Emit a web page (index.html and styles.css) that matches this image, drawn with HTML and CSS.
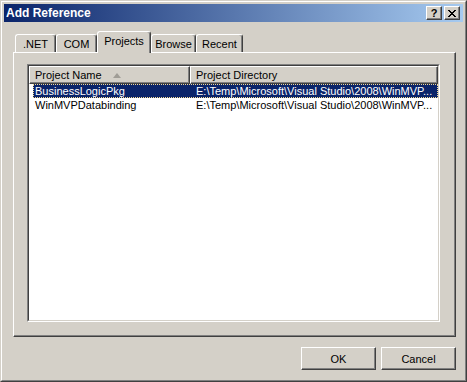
FILE: index.html
```html
<!DOCTYPE html>
<html lang="en">
    <head>
        <meta charset="UTF-8">
        <title>Add Reference</title>
        <link rel="stylesheet" href="styles.css">
    </head>
    <body>
        <div class="window">
            <div class="frame">
                <div class="titlebar">
                    <span class="title">Add Reference</span>
                    <button class="caption-btn help">?</button>
                    <button class="caption-btn close">
                        <svg width="8" height="7" viewBox="0 0 8 7"><path fill="#000" d="M0 0h2v1H0zM6 0h2v1H6zM1 1h2v1H1zM5 1h2v1H5zM2 2h4v1H2zM3 3h2v1H3zM2 4h4v1H2zM1 5h2v1H1zM5 5h2v1H5zM0 6h2v1H0zM6 6h2v1H6z"/></svg>
                    </button>
                </div>
                <div class="content">
                    <div class="tabs">
                        <div class="tab tab-net">.NET</div>
                        <div class="tab tab-com">COM</div>
                        <div class="tab tab-projects active">Projects</div>
                        <div class="tab tab-browse">Browse</div>
                        <div class="tab tab-recent">Recent</div>
                    </div>
                    <div class="panel">
                        <div class="list">
                            <div class="list-inner">
                                <div class="header">
                                    <div class="col col-name">Project Name
                                        <svg class="sort" width="8" height="5" viewBox="0 0 8 5"><path fill="#a09d96" d="M4 0L8 5H0z"/></svg>
                                    </div>
                                    <div class="col col-dir">Project Directory</div>
                                </div>
                                <div class="row selected">
                                    <div class="cell cell-name">BusinessLogicPkg</div>
                                    <div class="cell cell-dir">E:\Temp\Microsoft\Visual Studio\2008\WinMVP...</div>
                                </div>
                                <div class="row">
                                    <div class="cell cell-name">WinMVPDatabinding</div>
                                    <div class="cell cell-dir">E:\Temp\Microsoft\Visual Studio\2008\WinMVP...</div>
                                </div>
                            </div>
                        </div>
                    </div>
                    <div class="footer">
                        <button class="btn">OK</button>
                        <button class="btn">Cancel</button>
                    </div>
                </div>
            </div>
        </div>
    </body>
</html>
```

FILE: styles.css
```css
body{
    margin:0;
    background:#d4d0c8;
    font-family:"Liberation Sans",Arial,sans-serif;
    font-size:11px;
    color:#000;
}
.window{
    width:467px;
    height:382px;
    box-sizing:border-box;
    border:1px solid;
    border-color:#d4d0c8 #404040 #404040 #d4d0c8;
}
.frame{
    height:100%;
    box-sizing:border-box;
    border:1px solid;
    border-color:#fff #808080 #808080 #fff;
    padding:2px;
}
.titlebar{
    height:18px;
    display:flex;
    align-items:center;
    padding:0 3px 0 2px;
    background:linear-gradient(to right,#0a246a,#a6caf0);
    color:#fff;
    font-weight:bold;
    font-size:12px;
}
.title{
    flex:1;
    line-height:16px;
}
.caption-btn{
    width:16px;
    height:14px;
    box-sizing:border-box;
    margin:0;
    padding:0;
    border:1px solid;
    border-color:#fff #404040 #404040 #fff;
    box-shadow:inset -1px -1px #808080;
    background:#d4d0c8;
    display:flex;
    align-items:center;
    justify-content:center;
    font-family:"Liberation Sans",Arial,sans-serif;
    font-weight:bold;
    font-size:11px;
    line-height:12px;
    color:#000;
}
.help{
    margin-right:2px;
}
.content{
    padding:9px 7px 0 9px;
}
.tabs{
    display:flex;
    align-items:flex-end;
    height:21px;
    padding-left:2px;
    position:relative;
    z-index:1;
}
.tab{
    height:18px;
    box-sizing:border-box;
    border-top:1px solid #fff;
    border-left:1px solid #fff;
    border-right:1px solid #404040;
    box-shadow:inset -1px 0 #808080;
    border-radius:3px 3px 0 0;
    background:#d4d0c8;
    text-align:center;
    line-height:18px;
}
.tab-net{ width:41px; }
.tab-com{ width:41px; }
.tab-projects{ width:54px; }
.tab-browse{ width:45px; }
.tab-recent{ width:47px; }
.tab.active{
    height:22px;
    margin-bottom:-1px;
    line-height:19px;
}
.panel{
    width:443px;
    height:285px;
    box-sizing:border-box;
    border:1px solid;
    border-color:#fff #404040 #404040 #fff;
    box-shadow:inset -1px -1px #808080;
    padding:11px 15px 13px 13px;
}
.list{
    width:413px;
    height:258px;
    box-sizing:border-box;
    border:1px solid;
    border-color:#808080 #fff #fff #808080;
}
.list-inner{
    height:100%;
    box-sizing:border-box;
    border:1px solid;
    border-color:#404040 #d4d0c8 #d4d0c8 #404040;
    background:#fff;
}
.header{
    display:flex;
    height:18px;
}
.col{
    box-sizing:border-box;
    height:18px;
    border:1px solid;
    border-color:#fff #404040 #404040 #fff;
    box-shadow:inset -1px -1px #808080;
    background:#d4d0c8;
    padding-left:5px;
    line-height:17px;
    white-space:nowrap;
}
.col-name{
    width:161px;
}
.col-dir{
    flex:1;
}
.sort{
    margin-left:8px;
    vertical-align:1px;
}
.row{
    display:flex;
    height:14px;
    line-height:14px;
    margin-left:4px;
    white-space:nowrap;
    overflow:hidden;
}
.cell-name{
    width:156px;
    padding-left:2px;
}
.cell-dir{
    padding-left:5px;
}
.row.selected{
    background:#0a246a;
    color:#fff;
    outline:1px dotted #f5db95;
    outline-offset:-1px;
}
.footer{
    display:flex;
    justify-content:flex-end;
    gap:5px;
    padding-top:10px;
}
.btn{
    width:75px;
    height:23px;
    box-sizing:border-box;
    margin:0;
    border:1px solid;
    border-color:#fff #404040 #404040 #fff;
    box-shadow:inset -1px -1px #808080;
    background:#d4d0c8;
    font-family:"Liberation Sans",Arial,sans-serif;
    font-size:11px;
    color:#000;
}
```
